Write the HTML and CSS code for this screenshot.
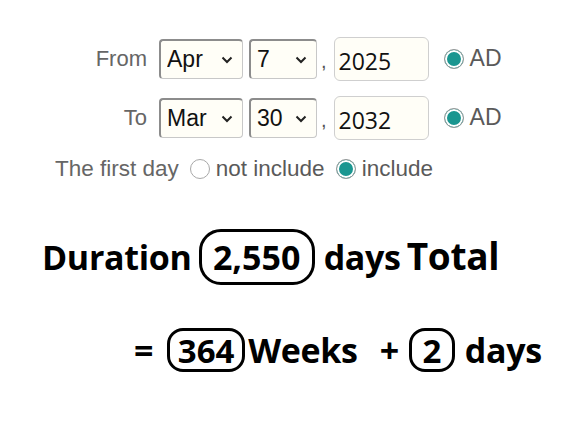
FILE: index.html
```html
<!DOCTYPE html>
<html lang="en">
<head>
<meta charset="utf-8">
<title>Duration</title>
<link rel="stylesheet" href="styles.css">
</head>
<body>
<div class="form">
  <div class="row">
    <span class="label">From</span>
    <span class="sel sel-m"><select><option>Apr</option></select><svg class="chev" width="12" height="8" viewBox="0 0 12 8"><path d="M1.5 1.5 L6 6 L10.5 1.5" fill="none" stroke="#222" stroke-width="2"/></svg></span>
    <span class="sel sel-d"><select><option>7</option></select><svg class="chev" width="12" height="8" viewBox="0 0 12 8"><path d="M1.5 1.5 L6 6 L10.5 1.5" fill="none" stroke="#222" stroke-width="2"/></svg></span>
    <span class="comma">,</span>
    <input class="year" type="text" value="2025">
    <label class="opt"><input class="radio" type="radio" checked><span>AD</span></label>
  </div>
  <div class="row">
    <span class="label">To</span>
    <span class="sel sel-m"><select><option>Mar</option></select><svg class="chev" width="12" height="8" viewBox="0 0 12 8"><path d="M1.5 1.5 L6 6 L10.5 1.5" fill="none" stroke="#222" stroke-width="2"/></svg></span>
    <span class="sel sel-d"><select><option>30</option></select><svg class="chev" width="12" height="8" viewBox="0 0 12 8"><path d="M1.5 1.5 L6 6 L10.5 1.5" fill="none" stroke="#222" stroke-width="2"/></svg></span>
    <span class="comma">,</span>
    <input class="year" type="text" value="2032">
    <label class="opt"><input class="radio" type="radio" checked><span>AD</span></label>
  </div>
  <div class="row first">
    <span class="first-label">The first day</span>
    <label class="opt"><input class="radio" type="radio" name="fd"><span>not include</span></label>
    <label class="opt"><input class="radio" type="radio" name="fd" checked><span>include</span></label>
  </div>
</div>
<div class="result">
  <div class="line1">
    <span class="word">Duration</span>
    <span class="box box-big">2,550</span>
    <span class="word">days</span>
    <span class="word total">Total</span>
  </div>
  <div class="line2">
    <span class="word eq">=</span>
    <span class="box box-sm">364</span>
    <span class="word weeks">Weeks</span>
    <span class="word plus">+</span>
    <span class="box box-sm box-one">2</span>
    <span class="word">days</span>
  </div>
</div>
</body>
</html>
```
FILE: styles.css
```css
html, body {
  margin: 0;
  padding: 0;
  background: #fff;
}
body {
  font-family: "Liberation Sans", Arial, sans-serif;
  color: #666;
}
.form {
  padding-top: 38px;
  display: flex;
  flex-direction: column;
  gap: 18px;
}
.row {
  display: flex;
  align-items: center;
  height: 41px;
}
.label {
  width: 147px;
  text-align: right;
  font-size: 22px;
  color: #666;
  margin-right: 12px;
}
.sel {
  position: relative;
  display: inline-block;
  margin-right: 6px;
}
.sel select {
  appearance: none;
  -webkit-appearance: none;
  height: 40px;
  box-sizing: border-box;
  border-style: solid;
  border-width: 2px 1px 1px 2px;
  border-color: #8c8c8c #c8c8c8 #c8c8c8 #8c8c8c;
  border-radius: 4px;
  background: #fffef7;
  font-family: "Liberation Sans", Arial, sans-serif;
  font-size: 23px;
  color: #111;
  padding: 0 0 0 6px;
  outline: none;
}
.sel-m select { width: 84px; }
.sel-d select { width: 68px; }
.chev {
  position: absolute;
  right: 10px;
  top: 17px;
  pointer-events: none;
}
.comma {
  font-size: 20px;
  color: #555;
  margin: 6px 7px 0 -2px;
}
.year {
  width: 95px;
  height: 44px;
  box-sizing: border-box;
  border: 1px solid #cfcfcf;
  border-radius: 6px;
  background: #fffef7;
  font-family: "Open Sans", "Noto Sans", sans-serif;
  font-size: 23px;
  color: #111;
  padding: 4px 0 0 4px;
  margin-right: 15px;
  outline: none;
}
.opt {
  display: inline-flex;
  align-items: center;
  font-size: 23px;
  color: #5a5a5a;
}
.radio {
  appearance: none;
  -webkit-appearance: none;
  width: 20px;
  height: 20px;
  margin: 0 6px 0 0;
  border-radius: 50%;
  border: 1px solid #a8a8a8;
  background: #fff;
  box-sizing: border-box;
}
.radio:checked {
  background: #1a9690;
  box-shadow: inset 0 0 0 2px #fff;
  border-color: #9a9a9a;
}
.first {
  height: 30px;
  margin-top: -2px;
  padding-left: 55px;
}
.first-label {
  font-size: 22.5px;
  color: #666;
  margin-right: 11px;
}
.first .opt {
  font-size: 22.5px;
  margin-right: 11px;
}
.result {
  font-family: "Open Sans", "Noto Sans", sans-serif;
  font-weight: 700;
  color: #000;
  padding-top: 44px;
}
.line1 {
  display: flex;
  align-items: center;
  padding-left: 42px;
  height: 58px;
}
.word {
  font-size: 34px;
  letter-spacing: -0.3px;
}
.total {
  font-size: 37px;
  margin-left: 6px;
  position: relative;
  top: -2px;
}
.box {
  display: inline-flex;
  align-items: center;
  justify-content: center;
  border: 3px solid #000;
  box-sizing: border-box;
  font-size: 34px;
}
.box-big {
  width: 116px;
  height: 56px;
  border-radius: 22px;
  margin: 0 9px 0 7px;
}
.line2 {
  display: flex;
  align-items: center;
  padding-left: 134px;
  margin-top: 42px;
  height: 44px;
}
.eq {
  margin-right: 14px;
}
.box-sm {
  height: 44px;
  width: 78px;
  border-radius: 16px;
  font-size: 33px;
}
.weeks {
  margin-left: 3px;
}
.plus {
  margin-left: 22px;
  margin-right: 10px;
}
.box-one {
  width: 46px;
  margin-right: 10px;
}
```
